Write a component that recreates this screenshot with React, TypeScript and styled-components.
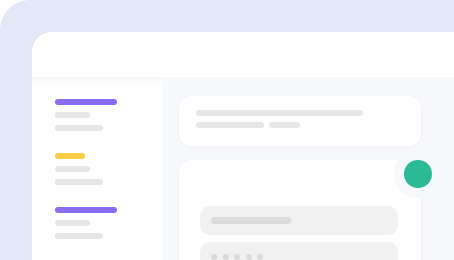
import React from "react";
import styled, { createGlobalStyle } from "styled-components";

const Global = createGlobalStyle`
  html, body { margin: 0; padding: 0; background: #ffffff; }
  body { font-family: "Liberation Sans", Arial, sans-serif; }
  * { box-sizing: border-box; }
`;

const Page = styled.div`
  width: 454px;
  height: 260px;
  overflow: hidden;
  background: #e4e7f6;
  border-top-left-radius: 30px;
  padding: 32px 0 0 32px;
`;

const Window = styled.div`
  width: 100%;
  height: 100%;
  background: #ffffff;
  border-top-left-radius: 20px;
  display: flex;
  flex-direction: column;
  overflow: hidden;
`;

const Header = styled.div`
  height: 45px;
  flex: none;
  background: #ffffff;
`;

const Body = styled.div`
  flex: 1;
  display: flex;
  min-height: 0;
`;

const Sidebar = styled.div`
  width: 130px;
  flex: none;
  background: linear-gradient(#f6f7f9 0, #ffffff 10px);
  padding: 22px 0 0 23px;
  display: flex;
  flex-direction: column;
  gap: 22px;
`;

const Group = styled.div`
  display: flex;
  flex-direction: column;
  gap: 7px;
`;

const Bar = styled.div<{ $w: number; $c: string }>`
  width: ${(p) => p.$w}px;
  height: 6px;
  border-radius: 3px;
  background: ${(p) => p.$c};
`;

const Main = styled.div`
  flex: 1;
  background: #f7f8fc;
  padding: 19px 0 0 17px;
  display: flex;
  flex-direction: column;
  gap: 14px;
`;

const Card = styled.div<{ $h?: number }>`
  position: relative;
  width: 242px;
  ${(p) => (p.$h ? `height: ${p.$h}px;` : "flex: 1;")}
  flex-shrink: 0;
  background: #ffffff;
  border-radius: 12px;
  box-shadow: 0 1px 4px rgba(30, 40, 90, 0.03);
`;

const TopCardInner = styled.div`
  padding: 14px 17px;
  display: flex;
  flex-direction: column;
  gap: 6px;
`;

const Row = styled.div`
  display: flex;
  gap: 5px;
`;

const Line = styled.div<{ $w: number }>`
  width: ${(p) => p.$w}px;
  height: 6px;
  border-radius: 3px;
  background: #e6e6e6;
`;

const FormInner = styled.div`
  padding: 46px 23px 0 21px;
  display: flex;
  flex-direction: column;
  gap: 7px;
`;

const Field = styled.div`
  height: 29px;
  border-radius: 10px;
  background: #f1f1f1;
  display: flex;
  align-items: center;
  padding-left: 11px;
  gap: 5.6px;
`;

const FieldBar = styled.div`
  width: 80px;
  height: 7px;
  border-radius: 3.5px;
  background: #dcdcdc;
`;

const Dot = styled.div`
  width: 6px;
  height: 6px;
  border-radius: 50%;
  background: #dbdbdb;
`;

const BadgeRing = styled.div`
  position: absolute;
  left: 215px;
  top: -10px;
  width: 48px;
  height: 48px;
  border-radius: 50%;
  background: #f7f8fc;
  display: flex;
  align-items: center;
  justify-content: center;
`;

const Badge = styled.div`
  width: 28px;
  height: 28px;
  border-radius: 50%;
  background: #2bb996;
`;

const PURPLE = "#8b6cf9";
const YELLOW = "#fdcf46";
const GRAY = "#e6e6e6";

const groups = [PURPLE, YELLOW, PURPLE];
const groupW = [62, 30, 62];

export default function App() {
  return (
    <>
      <Global />
      <Page>
        <Window>
          <Header />
          <Body>
            <Sidebar>
              {groups.map((c, i) => (
                <Group key={i}>
                  <Bar $w={groupW[i]} $c={c} />
                  <Bar $w={35} $c={GRAY} />
                  <Bar $w={48} $c={GRAY} />
                </Group>
              ))}
            </Sidebar>
            <Main>
              <Card $h={50}>
                <TopCardInner>
                  <Line $w={167} />
                  <Row>
                    <Line $w={68} />
                    <Line $w={31} />
                  </Row>
                </TopCardInner>
              </Card>
              <Card>
                <BadgeRing>
                  <Badge />
                </BadgeRing>
                <FormInner>
                  <Field>
                    <FieldBar />
                  </Field>
                  <Field>
                    {[0, 1, 2, 3, 4].map((i) => (
                      <Dot key={i} />
                    ))}
                  </Field>
                </FormInner>
              </Card>
            </Main>
          </Body>
        </Window>
      </Page>
    </>
  );
}
